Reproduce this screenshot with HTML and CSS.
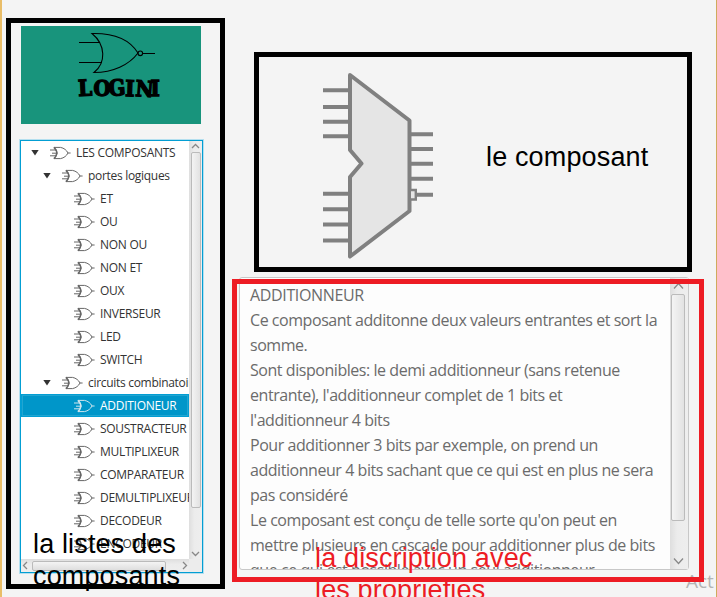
FILE: index.html
```html
<!DOCTYPE html>
<html lang="fr">
<head>
<meta charset="utf-8">
<title>Logini</title>
<link rel="stylesheet" href="styles.css">
</head>
<body>
<svg class="defs" width="0" height="0" aria-hidden="true">
  <symbol id="gate" viewBox="0 0 22 14">
    <path d="M5 1.4H11.5C15 2 17.6 4.2 19 7C17.6 9.8 15 12 11.5 12.6H5C8.8 9 8.8 5 5 1.4M1 4H7M1 9.8H7M3 7.2H8.4M19 7H21.6" fill="none" stroke="currentColor"/>
    <path d="M5 1.4C8.6 5 8.6 9 5 12.6" fill="none" stroke="currentColor" stroke-width="1.5"/>
  </symbol>
</svg>
<main class="window">
  <aside class="sidebar">
    <header class="banner">
      <svg width="180" height="98" viewBox="0 0 180 98">
        <g fill="none" stroke="#000" stroke-width="1.1">
          <path d="M58 16.5H79M58 36.5H81M122 27.5H134"/>
          <path d="M71 7.5C93 7 109 14 117 27C108 39 92 46.500 73 46.500C85 37 85 19 71 7.500Z"/>
          <circle cx="119.300" cy="27.300" r="2.300"/>
        </g>
        <text class="brand" y="70" x="57.500 72.500 88 104 114 129.500" rotate="-3 0 -4 2 4 0">LOGINI</text>
      </svg>
    </header>
    <section class="tree">
      <ul class="rows">
        <li class="row l0"><i class="arrow"></i><svg class="gate"><use href="#gate"/></svg><span>LES COMPOSANTS</span></li>
        <li class="row l1"><i class="arrow"></i><svg class="gate"><use href="#gate"/></svg><span class="lower">portes logiques</span></li>
        <li class="row l2"><svg class="gate"><use href="#gate"/></svg><span>ET</span></li>
        <li class="row l2"><svg class="gate"><use href="#gate"/></svg><span>OU</span></li>
        <li class="row l2"><svg class="gate"><use href="#gate"/></svg><span>NON OU</span></li>
        <li class="row l2"><svg class="gate"><use href="#gate"/></svg><span>NON ET</span></li>
        <li class="row l2"><svg class="gate"><use href="#gate"/></svg><span>OUX</span></li>
        <li class="row l2"><svg class="gate"><use href="#gate"/></svg><span>INVERSEUR</span></li>
        <li class="row l2"><svg class="gate"><use href="#gate"/></svg><span>LED</span></li>
        <li class="row l2"><svg class="gate"><use href="#gate"/></svg><span>SWITCH</span></li>
        <li class="row l1"><i class="arrow"></i><svg class="gate"><use href="#gate"/></svg><span class="lower">circuits combinatoires</span></li>
        <li class="row l2 selected"><svg class="gate"><use href="#gate"/></svg><span>ADDITIONEUR</span></li>
        <li class="row l2"><svg class="gate"><use href="#gate"/></svg><span>SOUSTRACTEUR</span></li>
        <li class="row l2"><svg class="gate"><use href="#gate"/></svg><span>MULTIPLIXEUR</span></li>
        <li class="row l2"><svg class="gate"><use href="#gate"/></svg><span>COMPARATEUR</span></li>
        <li class="row l2"><svg class="gate"><use href="#gate"/></svg><span>DEMULTIPLIXEUR</span></li>
        <li class="row l2"><svg class="gate"><use href="#gate"/></svg><span>DECODEUR</span></li>
        <li class="row l2"><svg class="gate"><use href="#gate"/></svg><span>ENCODEUR</span></li>
      </ul>
      <div class="vbar">
        <svg width="13" height="11"><path d="M3 7L6.500 3.500L10 7"/></svg>
        <div class="thumb tree-v"></div>
        <svg class="end" width="13" height="11"><path d="M3 4L6.500 7.500L10 4"/></svg>
      </div>
      <div class="hbar">
        <svg width="11" height="13"><path d="M6 3L2.500 6.500L6 10"/></svg>
        <div class="thumb tree-h"></div>
        <svg class="end" width="11" height="13"><path d="M5 3L8.500 6.500L5 10"/></svg>
      </div>
      <div class="corner"></div>
    </section>
  </aside>
  <section class="detail">
    <div class="figure">
      <svg width="112" height="190" viewBox="322 70 112 190">
        <path d="M350 75L409.500 120.500V211L350 256.500V177L361.500 163.500L350 150Z" fill="#e5e5e5" stroke="#808080" stroke-width="4" stroke-linejoin="round"/>
        <path d="M323 90.300H349M323 107H349M323 121.700H349M323 136.300H349M323 193.800H349M323 209.200H349M323 224.500H349M323 240.500H349M410 134.200H433M410 149H433M410 163.800H433M410 178.800H433M417 194.700H433" fill="none" stroke="#808080" stroke-width="4"/>
        <path d="M411 190H415.800V199.500H411" fill="#e5e5e5" stroke="#808080" stroke-width="2.400"/>
      </svg>
    </div>
    <article class="description">
      <div class="copy">
        <p>ADDITIONNEUR</p>
        <p>Ce composant additonne deux valeurs entrantes et sort la</p>
        <p>somme.</p>
        <p>Sont disponibles: le demi additionneur (sans retenue</p>
        <p>entrante), l'additionneur complet de 1 bits et</p>
        <p>l'additionneur 4 bits</p>
        <p>Pour additionner 3 bits par exemple, on prend un</p>
        <p>additionneur 4 bits sachant que ce qui est en plus ne sera</p>
        <p>pas considéré</p>
        <p>Le composant est conçu de telle sorte qu'on peut en</p>
        <p>mettre plusieurs en cascade pour additionner plus de bits</p>
        <p>que ce qui est possible avec un seul additionneur</p>
      </div>
      <div class="vbar wide">
        <svg width="17" height="16"><path d="M4 10.500L8.500 5.500L13 10.500"/></svg>
        <div class="thumb text-v"></div>
        <svg class="end" width="17" height="16"><path d="M4 5.500L8.500 10.500L13 5.500"/></svg>
      </div>
    </article>
  </section>
  <div class="watermark">Act</div>
  <div class="note list-note">la listes des<br>composants</div>
  <div class="note figure-note">le composant</div>
  <div class="note text-note">la discription avec<br>les propriefies</div>
  <div class="frame list-frame"></div>
  <div class="frame figure-frame"></div>
  <div class="frame text-frame"></div>
</main>
</body>
</html>
```
FILE: styles.css
```css
* { box-sizing: border-box; }

body { margin: 0; background: #f4f4f4; }

.defs { position: absolute; }

.window {
  position: relative;
  display: flex;
  width: 717px;
  height: 597px;
  overflow: hidden;
  padding-left: 18px;
  background: #f4f4f4;
  border-left: 2px solid #e9bd68;
  border-right: 1px solid #cfaa5c;
  font-family: "Open Sans", "Noto Sans", sans-serif;
}

.sidebar {
  width: 183px;
  padding-top: 26px;
  display: flex;
  flex-direction: column;
  gap: 16px;
}

.banner { width: 180px; height: 98px; margin-left: 1px; background: #18947c; }
.banner svg { display: block; }
.brand {
  font: bold 22px "DejaVu Serif", serif;
  font-stretch: condensed;
  stroke: #000;
  stroke-width: 1.3px;
}

.tree {
  display: grid;
  grid-template: 418px 13px / 168px 13px;
  width: 183px;
  height: 433px;
  border: 1px solid #039ed3;
  box-shadow: 0 0 0 1px #b4dfef;
  background: #fff;
}

.rows { margin: 0; padding: 0; list-style: none; overflow: hidden; }

.row {
  display: flex;
  align-items: center;
  height: 23px;
  color: #333;
  font-size: 12px;
  line-height: 23px;
  letter-spacing: -0.28px;
  white-space: nowrap;
}
.row .lower { letter-spacing: -0.3px; }
.l0 { padding-left: 10px; }
.l1 { padding-left: 22px; }
.l2 { padding-left: 52px; }
.selected { background: #0096c9; color: #fff; box-shadow: inset 0 0 0 1px #039ed3, inset 0 0 0 2px #21a5d1; }
.selected .gate { color: #cfe6ee; }

.arrow {
  flex: none;
  width: 8px;
  height: 6px;
  margin-right: 10px;
  background: #333;
  clip-path: polygon(0 0, 100% 0, 50% 100%);
}
.gate { flex: none; width: 22px; height: 14px; margin-right: 5px; color: #666; }

.vbar, .hbar {
  display: flex;
  background: linear-gradient(90deg, #dedede, #ececec 40%, #eee);
}
.vbar { flex-direction: column; align-items: center; }
.hbar { align-items: center; background: linear-gradient(#dedede, #ececec 40%, #eee); }
.corner { background: #ececec; }
.vbar svg, .hbar svg { flex: none; fill: none; stroke: #888; stroke-width: 1.3; }
.end { margin-left: auto; }
.vbar .end { margin-left: 0; margin-top: auto; }

.thumb {
  border: 1px solid #bbb;
  border-radius: 2px;
  background: linear-gradient(90deg, #f4f4f4, #e2e2e2);
}
.tree-v { width: 10px; height: 356px; }
.tree-h { width: 134px; height: 10px; background: linear-gradient(#f4f4f4, #dedede); }

.detail {
  width: 450px;
  margin-left: 36px;
  padding-top: 52px;
}
.figure {
  height: 220px;
  padding: 18px 0 0 83px;
}
.figure svg { display: block; }

.description {
  display: grid;
  grid-template-columns: 1fr 18px;
  height: 293px;
  margin-top: 5px;
  border: 1px solid #c8c8c8;
  border-radius: 3px;
  background: #fdfdfd;
}
.wide { padding-right: 2px; }
.copy {
  overflow: hidden;
  padding: 5px 0 0 10px;
  color: #6b6b6b;
  font-size: 16px;
  line-height: 25px;
  letter-spacing: -0.45px;
  white-space: nowrap;
}
.copy p { margin: 0; }
.copy p:first-child { letter-spacing: -0.35px; }
.text-v { width: 14px; height: 227px; }

.watermark {
  position: absolute;
  left: 684px;
  top: 568px;
  color: #b4b4b4;
  font-size: 19px;
  line-height: 26px;
}

.note {
  position: absolute;
  color: #000;
  font: 27px/32px "Liberation Sans", Arial, sans-serif;
  letter-spacing: 0.15px;
  white-space: nowrap;
}
.list-note { left: 31px; top: 528px; }
.figure-note { left: 484px; top: 141px; }
.text-note { left: 313px; top: 542px; color: #ed1c24; }

.frame { position: absolute; border: 5px solid #000; }
.list-frame { left: 4px; top: 18px; width: 219px; height: 571px; }
.figure-frame { left: 252px; top: 52px; width: 438px; height: 220px; }
.text-frame { left: 230px; top: 279px; width: 472px; height: 303px; border-color: #ed1c24; }
```
